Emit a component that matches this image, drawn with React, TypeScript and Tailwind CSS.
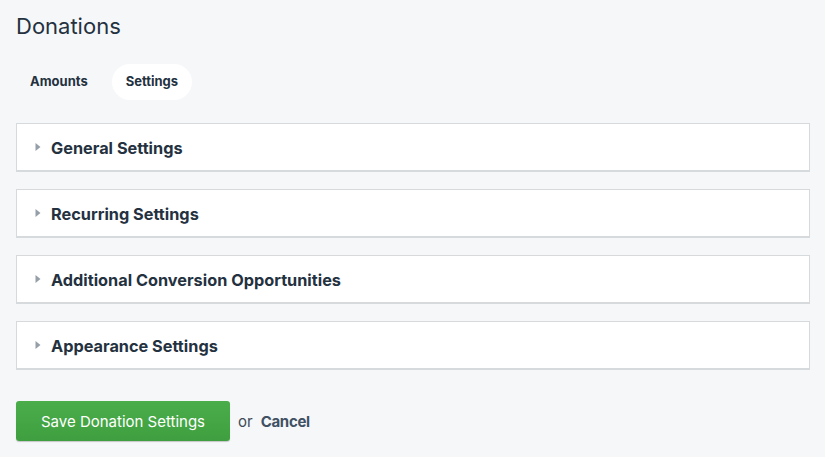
const sections = [
  "General Settings",
  "Recurring Settings",
  "Additional Conversion Opportunities",
  "Appearance Settings",
];

function Caret() {
  return (
    <svg width="6" height="10" viewBox="0 0 6 10" className="text-[#959fa8]">
      <path d="M0.5 1 L5.5 5 L0.5 9 Z" fill="currentColor" />
    </svg>
  );
}

export default function App() {
  return (
    <div className="min-h-[457px] bg-[#f6f7f9] px-4 pt-[12px] font-['Inter','Lato',sans-serif] text-[#24313f]">
      <h1 className="text-[22px] leading-[28px] font-normal">Donations</h1>

      <div className="mt-[24px] flex items-center">
        <button className="h-[36px] px-[14px] rounded-full text-[13px] font-bold text-[#24313f]">
          Amounts
        </button>
        <button className="ml-[10px] h-[36px] px-[14px] rounded-full bg-white text-[13px] font-bold text-[#24313f]">
          Settings
        </button>
      </div>

      <div className="mt-[23px] flex flex-col gap-[17px] w-[794px]">
        {sections.map((s) => (
          <div
            key={s}
            className="h-[49px] bg-white border border-[#d6dadd] border-b-2 flex items-center pl-[18px]"
          >
            <Caret />
            <span className="ml-[10px] mt-[2px] text-[16.3px] font-bold">{s}</span>
          </div>
        ))}
      </div>

      <div className="mt-[31px] flex items-center">
        <button className="h-[40px] w-[214px] rounded-[3px] bg-gradient-to-b from-[#4aad4a] to-[#3f9f40] pt-[2px] text-white text-[15px] shadow-[0_1px_1px_rgba(0,0,0,0.2)]">
          Save Donation Settings
        </button>
        <span className="ml-[8px] pt-[2px] text-[15px] text-[#3d4a57]">or</span>
        <a className="ml-[8px] pt-[2px] text-[15px] tracking-[-0.3px] font-bold text-[#3f5163]">Cancel</a>
      </div>
    </div>
  );
}
